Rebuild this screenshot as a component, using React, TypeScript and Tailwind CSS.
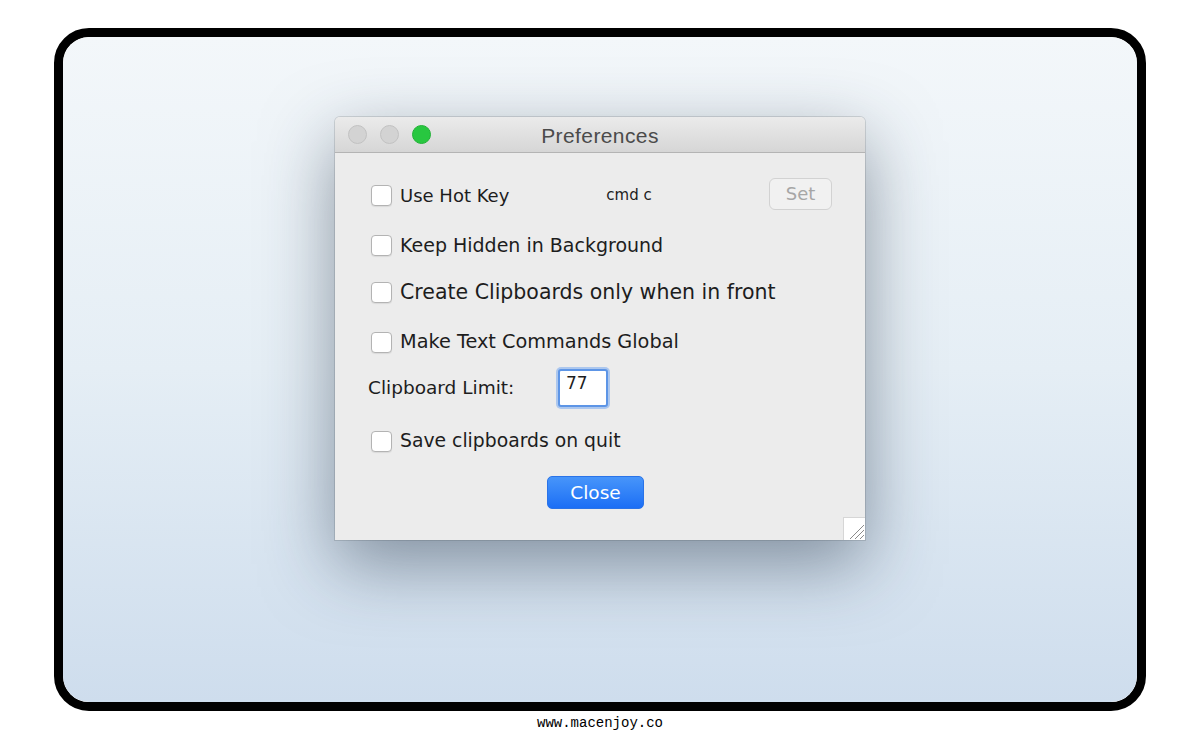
import React from 'react';

const font = { fontFamily: '"DejaVu Sans", "Liberation Sans", sans-serif' };

const Checkbox: React.FC = () => (
  <span className="inline-block w-[21px] h-[21px] shrink-0 rounded-[4px] border border-[#b3b3b3] bg-white shadow-[0_1px_1px_rgba(0,0,0,0.08)]" />
);

const CheckRow: React.FC<{ label: string; size?: string; className?: string; children?: React.ReactNode }> = ({
  label,
  size = 'text-[19px]',
  className = '',
  children,
}) => (
  <div className={`flex items-center h-[36px] pl-[36px] pr-[33px] ${className}`}>
    <Checkbox />
    <span className={`ml-[8px] text-[#1d1d1d] ${size}`}>{label}</span>
    {children}
  </div>
);

const TrafficLights: React.FC = () => (
  <div className="flex items-center gap-[13px] pl-[13px]">
    <span className="w-[19px] h-[19px] rounded-full bg-[#d3d3d3] border border-[#c2c2c2]" />
    <span className="w-[19px] h-[19px] rounded-full bg-[#d3d3d3] border border-[#c2c2c2]" />
    <span className="w-[19px] h-[19px] rounded-full bg-[#28c740] border border-[#22b237]" />
  </div>
);

const ResizeGrip: React.FC = () => (
  <div className="absolute right-0 bottom-0 w-[22px] h-[23px] bg-white border-l border-t border-[#d6d6d6]">
    <svg width="22" height="23" viewBox="0 0 22 23">
      <path d="M6 21 L20 7 M11 21 L20 12 M16 21 L20 17" stroke="#8a8a8a" strokeWidth="1" />
    </svg>
  </div>
);

export default function App() {
  return (
    <div className="w-full h-[735px] bg-white flex flex-col items-center" style={font}>
      <div className="mt-[28px] w-[1092px] h-[683px] border-[9px] border-black rounded-[35px] overflow-hidden">
        <div className="w-full h-full rounded-[26px] bg-gradient-to-b from-[#f3f7fa] via-[#e5eef5] to-[#cedded] flex justify-center pt-[80px]">
          <div className="relative w-[530px] h-[423px] bg-[#ececec] rounded-t-[5px] shadow-[0_24px_70px_rgba(40,55,75,0.5),0_0_0_1px_rgba(0,0,0,0.12)] flex flex-col">
            <div className="relative h-[36px] flex items-center rounded-t-[5px] bg-gradient-to-b from-[#ebebeb] to-[#d6d6d6] border-b border-[#b4b4b4]">
              <TrafficLights />
              <span
                className="absolute inset-0 flex items-center justify-center pt-[3px] text-[21px] tracking-[0.4px] text-[#4b4b4b]"
                style={{ fontFamily: '"Liberation Sans", Arial, sans-serif' }}
              >
                Preferences
              </span>
            </div>

            <div className="flex flex-col pt-[24px]">
              <CheckRow label="Use Hot Key" size="text-[18px]">
                <span className="ml-[97px] text-[15px] text-[#1d1d1d]">cmd c</span>
                <button className="ml-auto -mt-[3px] w-[63px] h-[32px] rounded-[6px] border border-[#d2d2d2] bg-[#f1f1f1] text-[18px] text-[#a6a6a6]">
                  Set
                </button>
              </CheckRow>
              <CheckRow label="Keep Hidden in Background" className="mt-[14px]" />
              <CheckRow label="Create Clipboards only when in front" size="text-[20.5px]" className="mt-[11px]" />
              <CheckRow label="Make Text Commands Global" size="text-[19.3px]" className="mt-[14px]" />
              <div className="flex items-center h-[38px] mt-[9px] pl-[33px]">
                <span className="w-[190px] text-[18.5px] text-[#1d1d1d]">Clipboard Limit:</span>
                <div className="w-[50px] h-[38px] rounded-[3px] bg-white border-[2px] border-[#5d95e6] shadow-[0_0_0_2px_rgba(120,170,240,0.55)] px-[6px] text-[17px] leading-[24px] text-[#1d1d1d]">
                  77
                </div>
              </div>
              <CheckRow label="Save clipboards on quit" size="text-[18.8px]" className="mt-[16px]" />
              <div className="flex mt-[17px] pl-[212px]">
                <button className="w-[97px] h-[33px] rounded-[5px] bg-gradient-to-b from-[#4795fa] to-[#1b6ef5] border border-[#2a73e8] text-white text-[18.5px]">
                  Close
                </button>
              </div>
            </div>
            <ResizeGrip />
          </div>
        </div>
      </div>
      <div
        className="mt-[4px] text-[14px] leading-[16px] text-black"
        style={{ fontFamily: '"Liberation Mono", monospace' }}
      >
        www.macenjoy.co
      </div>
    </div>
  );
}
